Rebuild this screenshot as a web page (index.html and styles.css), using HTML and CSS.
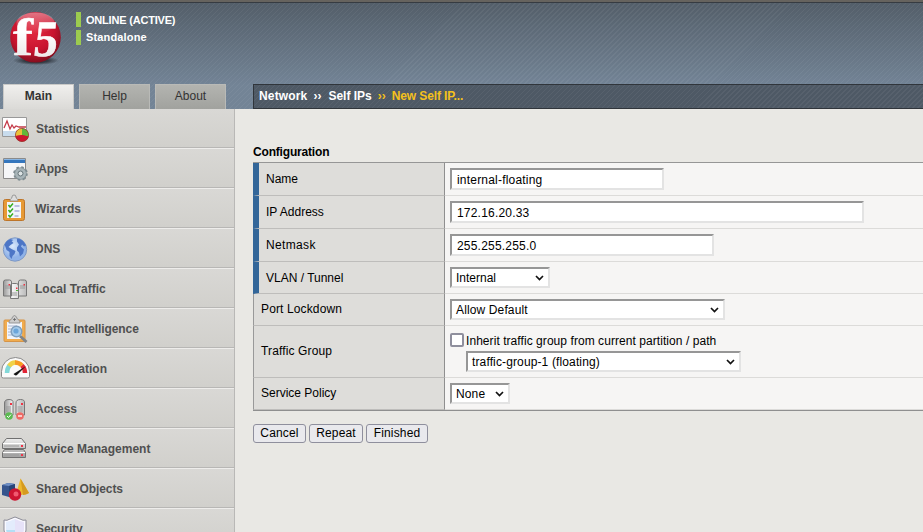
FILE: index.html
```html
<!DOCTYPE html>
<html lang="en">
<head>
<meta charset="utf-8">
<title>New Self IP</title>
<link rel="stylesheet" href="styles.css">
</head>
<body>
<header class="header">
  <div class="brand">
    <svg class="logo" width="60" height="66" viewBox="0 0 60 66">
      <defs>
        <radialGradient id="ball" cx=".45" cy=".35" r=".7"><stop offset="0" stop-color="#e32a40"/><stop offset=".6" stop-color="#c8142f"/><stop offset="1" stop-color="#760d1b"/></radialGradient>
        <linearGradient id="shine" x2="0" y2="1"><stop offset="0" stop-color="#fff" stop-opacity=".4"/><stop offset="1" stop-color="#fff" stop-opacity="0"/></linearGradient>
        <linearGradient id="letter" x2="0" y2="1"><stop offset=".4" stop-color="#fff"/><stop offset="1" stop-color="#e4e0e0"/></linearGradient>
        <radialGradient id="shade"><stop offset=".5" stop-color="#20242a" stop-opacity=".75"/><stop offset="1" stop-color="#20242a" stop-opacity="0"/></radialGradient>
      </defs>
      <ellipse cx="36" cy="60.500" rx="23" ry="4.500" fill="url(#shade)"/>
      <circle cx="35.500" cy="37.300" r="25.300" fill="url(#ball)"/>
      <ellipse cx="35.500" cy="23" rx="19" ry="10.500" fill="url(#shine)"/>
      <text class="logo-text" x="13" y="55" textLength="20" lengthAdjust="spacingAndGlyphs">f</text>
      <text class="logo-text logo-five" transform="translate(32.500 56) skewX(-6)" textLength="24" lengthAdjust="spacingAndGlyphs">5</text>
    </svg>
    <div class="status">
      <div class="status-line">ONLINE (ACTIVE)</div>
      <div class="status-line second">Standalone</div>
    </div>
  </div>
  <div class="bar">
    <nav class="tabs">
      <a class="tab active">Main</a>
      <a class="tab">Help</a>
      <a class="tab">About</a>
    </nav>
    <div class="crumbs"><span class="c1">Network</span><span class="sep">››</span><span class="c2">Self IPs</span><span class="sep now">››</span><span class="now c3">New Self IP...</span></div>
  </div>
</header>
<div class="body">
  <nav class="side">
    <a class="item"><svg class="icon" viewBox="0 0 32 39">
      <defs><linearGradient id="metal" x2="1"><stop offset="0" stop-color="#999"/><stop offset=".4" stop-color="#f4f4f4"/><stop offset="1" stop-color="#bbb"/></linearGradient>
      <linearGradient id="metalv" x2="0" y2="1"><stop offset="0" stop-color="#eee"/><stop offset="1" stop-color="#a0a0a0"/></linearGradient></defs>
      <path d="M2.500 9.500h24v19h-24z" fill="#fff" stroke="#999"/><path d="M3 23h23v5H3z" fill="#c8dced"/><path d="M4 20l3-7 3 8 2-4 2 3 2-2 3 1h7" fill="none" stroke="#c43a49" stroke-width="1.300"/>
      <circle cx="22" cy="27" r="6.700" fill="#d32336"/><path d="M22 27v-6.700a6.700 6.700 0 0 1 6.500 8.300z" fill="#61b83a"/><path d="M22 27v-6.700A6.700 6.700 0 0 0 15.500 28z" fill="#e9c23a"/><path d="M22 27l-6.500 1a6.700 6.700 0 0 0 13 .6z" fill="#cd1730"/><circle cx="22" cy="27" r="6.600" fill="none" stroke="#863c29" stroke-width=".6"/></svg><span>Statistics</span></a>
    <a class="item"><svg class="icon" viewBox="0 0 32 39"><path d="M3.500 10.500h22v20h-22z" fill="#f5f6f8" stroke="#8b8b8b"/><path d="M4 11h21v4H4z" fill="#3476bd"/><path d="M4 11h21v1H4z" fill="#88b5e3"/><circle cx="20.500" cy="25.500" r="6.300" fill="#89979c" stroke="#7e8c91" stroke-width="2" stroke-dasharray="2.500 2.450"/><circle cx="20.500" cy="25.500" r="5.400" fill="#a7b4b8"/><circle cx="20.500" cy="25.500" r="2.500" fill="#dce3e4" stroke="#66757a"/></svg><span class="nudge tight">iApps</span></a>
    <a class="item"><svg class="icon" viewBox="0 0 32 39"><rect x="3.500" y="11.500" width="21" height="21" rx="2" fill="#e79a35" stroke="#bd752a"/><path d="M7 14h14v16H7z" fill="#f2f5fc"/><path d="M10 13c0-3 2-2 2-4a2 2 0 0 1 4 0c0 2 2 1 2 4z" fill="#ddd" stroke="#888" stroke-width=".8"/><path d="M8.500 17l1.500 2 3-3.500M8.500 22l1.500 2 3-3.500M8.500 27l1.500 2 3-3.500" fill="none" stroke="#35ad20" stroke-width="1.500"/><path d="M14.500 18h5M14.500 23h5M14.500 28h4" stroke="#a8afd6" stroke-width="1.500"/></svg><span class="nudge">Wizards</span></a>
    <a class="item"><svg class="icon" viewBox="0 0 32 39"><defs><radialGradient id="sea" cx=".4" cy=".35"><stop offset="0" stop-color="#dbe9fc"/><stop offset="1" stop-color="#8fb2e8"/></radialGradient></defs><circle cx="15" cy="21.500" r="11.700" fill="url(#sea)" stroke="#7f99c4"/><path d="M4.500 17c1-3 3-5 6-6l3 1-2 1 2 2-3 2-2 2 3 2 4 2-1 3-2 2-1 3-2-3 0-4-3-2-1-3zM17 10.500c4 0 7 3 9 7l-2 1-2-2-1 2 3 3-1 4-3 3-1-4-2-2 0-3 2-3-2-3z" fill="#4d76c6"/></svg><span class="nudge">DNS</span></a>
    <a class="item"><svg class="icon" viewBox="0 0 32 39"><g fill="url(#metal)" stroke="#777"><path d="M3.500 14q0-2 2-2h4q2 0 2 2v14h-8zM18.500 14q0-2 2-2h4q2 0 2 2v14h-8zM10.500 18q0-2.500 2-2.500h4q2 0 2 2.500v12.500h-8z"/></g><path d="M5 18h5m-5 2h5m10-2h5m-5 2h5m-13 5h5m-5 2h5" stroke="#999"/><path d="M8.500 16h1.500v1.500H8.500zM23.500 16H25v1.500h-1.500zM16 19.500h1.500V21H16z" fill="#f03242"/><path d="M16 22h2v1h-2z" fill="#50b33b"/></svg><span class="nudge">Local Traffic</span></a>
    <a class="item"><svg class="icon" viewBox="0 0 32 39"><rect x="4" y="12" width="21" height="21.500" rx="1" fill="#f1ac4e" stroke="#d59448"/><path d="M7 14h15v17H7z" fill="#f1f4fa"/><path d="M9 15c0-4 3-3 3-5q2.500-5 5 0c0 2 3 1 3 5z" fill="#ccc" stroke="#878787" stroke-width=".8"/><path d="M14.500 10v3m-1.500-1.500h3" stroke="#666" stroke-width=".8"/><path d="M8 18h9M8 21h6M8 24h6M8 27h5" stroke="#aab7d0"/><path d="M20 28l6.500 6" stroke="#808589" stroke-width="3"/><circle cx="16.500" cy="23.500" r="5.300" fill="#a7cceb" stroke="#7f9fbd" stroke-width="1.500"/><circle cx="16" cy="23" r="2.600" fill="#6ca6da"/></svg><span class="nudge tight">Traffic Intelligence</span></a>
    <a class="item"><svg class="icon" viewBox="0 0 32 39"><path d="M1.500 28.500v-5a14 14 0 0 1 28 0v5q0 1.500-2 1.500h-24q-2 0-2-1.500z" fill="#fafafa" stroke="#888"/><g fill="none" stroke-width="4.500"><path d="M7 25q0-5 3-8" stroke="#82d8d8"/><path d="M9 18q3-4 7-3.500" stroke="#f0d247"/><path d="M15 14.500q4 0 7 3" stroke="#f79b22"/><path d="M22 17.500q3 3 3 7.500" stroke="#df2435"/></g><path d="M13.500 26L26 18l-8.500 8.500q-2 2-4-.5z" fill="#151515"/></svg><span class="nudge">Acceleration</span></a>
    <a class="item"><svg class="icon" viewBox="0 0 32 39"><path d="M4.500 15q0-3.500 4.500-3.500t4 3.500v12h-8.500zM16 15q0-3.500 4.500-3.500t4 3.500v12H16z" fill="url(#metal)" stroke="#777"/><path d="M6 19h5m-5 2h5m-5 2h5m6.500-4h5m-5 2h5m-5 2h5" stroke="#999"/><path d="M10 15h2v2h-2zM21 15h2v2h-2z" fill="#f03545"/><circle cx="9" cy="28" r="3.800" fill="#5cba52"/><path d="M7 28l1.500 1.500 2.500-3" fill="none" stroke="#fff"/><circle cx="20" cy="28" r="3.800" fill="#ee6964"/><path d="M18 28h4" stroke="#fff" stroke-width="1.300"/></svg><span class="nudge">Access</span></a>
    <a class="item"><svg class="icon" viewBox="0 0 32 39"><g stroke="#707070"><path d="M2.500 15.500l4-5h15l4 5v5h-23zM2.500 24.500l2-3h19l2 3v5h-23z" fill="url(#metalv)"/></g><path d="M3 15.500h22M3 24.500h22" stroke="#fff"/><path d="M4 18h15M4 27h15" stroke="#999"/><path d="M21 17h2v2h-2zM21 26h2v2h-2z" fill="#ef3548"/></svg><span class="nudge">Device Management</span></a>
    <a class="item"><svg class="icon" viewBox="0 0 32 39"><path d="M2 17l6-2 7 1v11l-6 2-7-2z" fill="#35548d"/><path d="M2 17l6-2 7 1-6 2z" fill="#6f8fc5"/><path d="M9 18v11l6-2V16z" fill="#274477"/><path d="M20.500 10.500L29 25q-5 3-13 1z" fill="#edb82f"/><path d="M20.500 10.500L29 25q-3 2-6 2z" fill="#d59a20"/><circle cx="15" cy="26.500" r="6.200" fill="#cc1531"/><circle cx="16" cy="26" r="2.500" fill="#f05a70"/></svg><span class="tight">Shared Objects</span></a>
    <a class="item"><svg class="icon" viewBox="0 0 32 39"><path d="M4 12q3 1 6-1l5-2 5 2q3 2 6 1v10q0 7-11 12Q4 29 4 22z" fill="#fafaff" stroke="#8c8c98"/><path d="M6 22V14l4-1 5-2v11z" fill="#e3ecfc"/><path d="M15 22h9q-1 6-9 10zM15 11l5 2 4 1v8h-9z" fill="#e6e2f8"/><path d="M6 22h9v10Q7 28 6 22z" fill="#b3dff5"/></svg><span class="tight">Security</span></a>
  </nav>
  <main class="main">
    <h2 class="title">Configuration</h2>
    <div class="table">
      <div class="row req"><label class="label">Name</label><div class="val"><input class="field name" value="internal-floating"></div></div>
      <div class="row req"><label class="label">IP Address</label><div class="val"><input class="field ip" value="172.16.20.33"></div></div>
      <div class="row req"><label class="label netmask">Netmask</label><div class="val"><input class="field mask" value="255.255.255.0"></div></div>
      <div class="row req vlan"><label class="label">VLAN / Tunnel</label><div class="val"><div class="select w100">Internal<svg class="chev" viewBox="0 0 9 6"><path d="M1 1l3.500 3.500L8 1"/></svg></div></div></div>
      <div class="row port"><label class="label wide">Port Lockdown</label><div class="val"><div class="select w275 wide">Allow Default<svg class="chev" viewBox="0 0 9 6"><path d="M1 1l3.500 3.500L8 1"/></svg></div></div></div>
      <div class="row group"><label class="label wide">Traffic Group</label><div class="val stack"><label class="check"><input type="checkbox" class="box"><span>Inherit traffic group from current partition / path</span></label><div class="select w275 indent wide">traffic-group-1 (floating)<svg class="chev" viewBox="0 0 9 6"><path d="M1 1l3.500 3.500L8 1"/></svg></div></div></div>
      <div class="row policy"><label class="label">Service Policy</label><div class="val"><div class="select w60 wide">None<svg class="chev" viewBox="0 0 9 6"><path d="M1 1l3.500 3.500L8 1"/></svg></div></div></div>
    </div>
    <div class="buttons"><button class="btn b1">Cancel</button><button class="btn b2">Repeat</button><button class="btn b3">Finished</button></div>
  </main>
</div>
</body>
</html>
```
FILE: styles.css
```css
* { box-sizing: border-box; }
body {
  margin: 0;
  width: 923px;
  height: 532px;
  overflow: hidden;
  background: #e9e8e4;
  color: #000;
  font: 12px/14px "Liberation Sans", Arial, sans-serif;
}
.header {
  height: 109px;
  border-top: 2px solid #66635e;
  box-shadow: inset 0 1px #363b41;
  background:
    repeating-linear-gradient(135deg, rgba(255,255,255,.05) 0 1px, transparent 1px 3.54px),
    linear-gradient(#535e69, #738496 78%);
}
.brand { display: flex; height: 82px; }
.logo { margin-top: -2px; flex: none; overflow: visible; }
.logo-text { font: bold 52px "Liberation Serif", serif; fill: url(#letter); stroke: #fff; stroke-width: .5; }
.logo-five { font-size: 51px; }
.status { margin: 10px 0 0 16px; color: #fff; font-weight: bold; font-size: 11px; }
.status-line { height: 15px; line-height: 16px; padding-left: 5px; border-left: 5px solid #9ccb4f; letter-spacing: -.2px; }
.second { margin-top: 3px; line-height: 15px; letter-spacing: .15px; }
.bar { display: flex; height: 25px; }
.tabs { display: flex; gap: 5px; width: 250px; padding-left: 3px; flex: none; }
.tab {
  width: 71px;
  border: 1px solid #b9bab7;
  border-bottom: 0;
  background: linear-gradient(#b3b4b0, #a1a29e);
  color: #333;
  text-align: center;
  line-height: 23px;
}
.tab.active { background: linear-gradient(#f0efed, #dbdad7); border-color: #c9c9c7; font-weight: bold; }
.crumbs {
  flex: 1;
  margin-left: 3px;
  padding-left: 5px;
  border: 1px solid #30353b;
  border-right: 0;
  background: repeating-linear-gradient(135deg, rgba(255,255,255,.05) 0 1px, transparent 1px 3.54px), #4e5965;
  color: #fff;
  font-weight: bold;
  line-height: 23px;
  white-space: nowrap;
}
.sep { margin: 0 6px; }
.c1 { letter-spacing: .15px; }
.c2 { margin-left: 1px; }
.c3 { letter-spacing: -.13px; }
.now { color: #f5c11c; }
.body { display: flex; height: 423px; }
.side {
  width: 235px;
  flex: none;
  overflow: hidden;
  border-right: 1px solid #b9b8b6;
}
.item {
  display: flex;
  height: 40px;
  border-top: 1px solid #eeedeb;
  border-bottom: 1px solid #b8b7b5;
  background: linear-gradient(#d9d8d5, #d1d0cc);
  color: #505050;
  font-weight: bold;
  line-height: 40px;
}
.item:first-child { height: 39px; border-top: 0; }
.icon { width: 32px; height: 39px; flex: none; margin: -1px 4px 0 0; }
.nudge { margin-left: -1px; }
.tight { letter-spacing: -.08px; }
.main { flex: 1; padding: 36px 0 0 18px; min-width: 0; }
.title { margin: 0 0 3px; font-size: 12px; line-height: 14px; letter-spacing: -.18px; }
.table {
  border-top: 1px solid #969696;
  border-bottom: 1px solid #8f8f8f;
  background: #f6f5f4;
}
.row { display: flex; height: 33px; border-bottom: 1px solid #dcdbd9; }
.vlan, .port { height: 32px; }
.group { height: 52px; }
.policy { height: 32px; }
.label {
  width: 192px;
  flex: none;
  display: flex;
  align-items: center;
  padding-left: 7px;
  padding-bottom: 2px;
  border-left: 1px solid #999;
  border-right: 1px solid #8f8f8f;
  margin-bottom: -1px;
  border-bottom: 1px solid #bebdbb;
  background: #deddda;
}
.req .label { border-left: 6px solid #336699; padding-bottom: 0; }
.label.netmask { letter-spacing: .35px; }
.val { padding: 5px 0 0 5px; }
.field, .select {
  display: block;
  height: 22px;
  border: 2px solid;
  border-color: #969696 #e3e3e3 #e3e3e3 #969696;
  background: #fff;
  color: #000;
  font: 12px/18px "Liberation Sans", Arial, sans-serif;
}
.field { padding: 2px 5px 0; outline: 0; letter-spacing: .2px; }
.select { position: relative; height: 21px; padding-left: 4px; line-height: 18px; }
.wide { letter-spacing: .13px; }
.name { width: 214px; }
.ip { width: 414px; }
.mask { width: 264px; }
.w100 { width: 100px; }
.w275 { width: 275px; }
.w60 { width: 60px; }
.chev { position: absolute; right: 4px; top: 6px; width: 9px; height: 6px; fill: none; stroke: #111; stroke-width: 1.7; }
.stack { padding-top: 7px; }
.check { display: flex; height: 14px; gap: 2px; line-height: 16px; letter-spacing: .06px; }
.box { appearance: none; width: 14px; height: 14px; margin: 0; border: 2px solid #8f8f9d; border-radius: 2px; background: #fff; }
.indent { margin: 4px 0 0 16px; }
.buttons { display: flex; gap: 3px; margin-top: 13px; }
.btn {
  height: 19px;
  padding: 0;
  border: 1px solid #8f8f9d;
  border-radius: 3px;
  background: #e9e9ed;
  color: #000;
  font: 12px/17px "Liberation Sans", Arial, sans-serif;
  letter-spacing: .15px;
}
.b1 { width: 53px; }
.b2 { width: 54px; }
.b3 { width: 62px; }
```
